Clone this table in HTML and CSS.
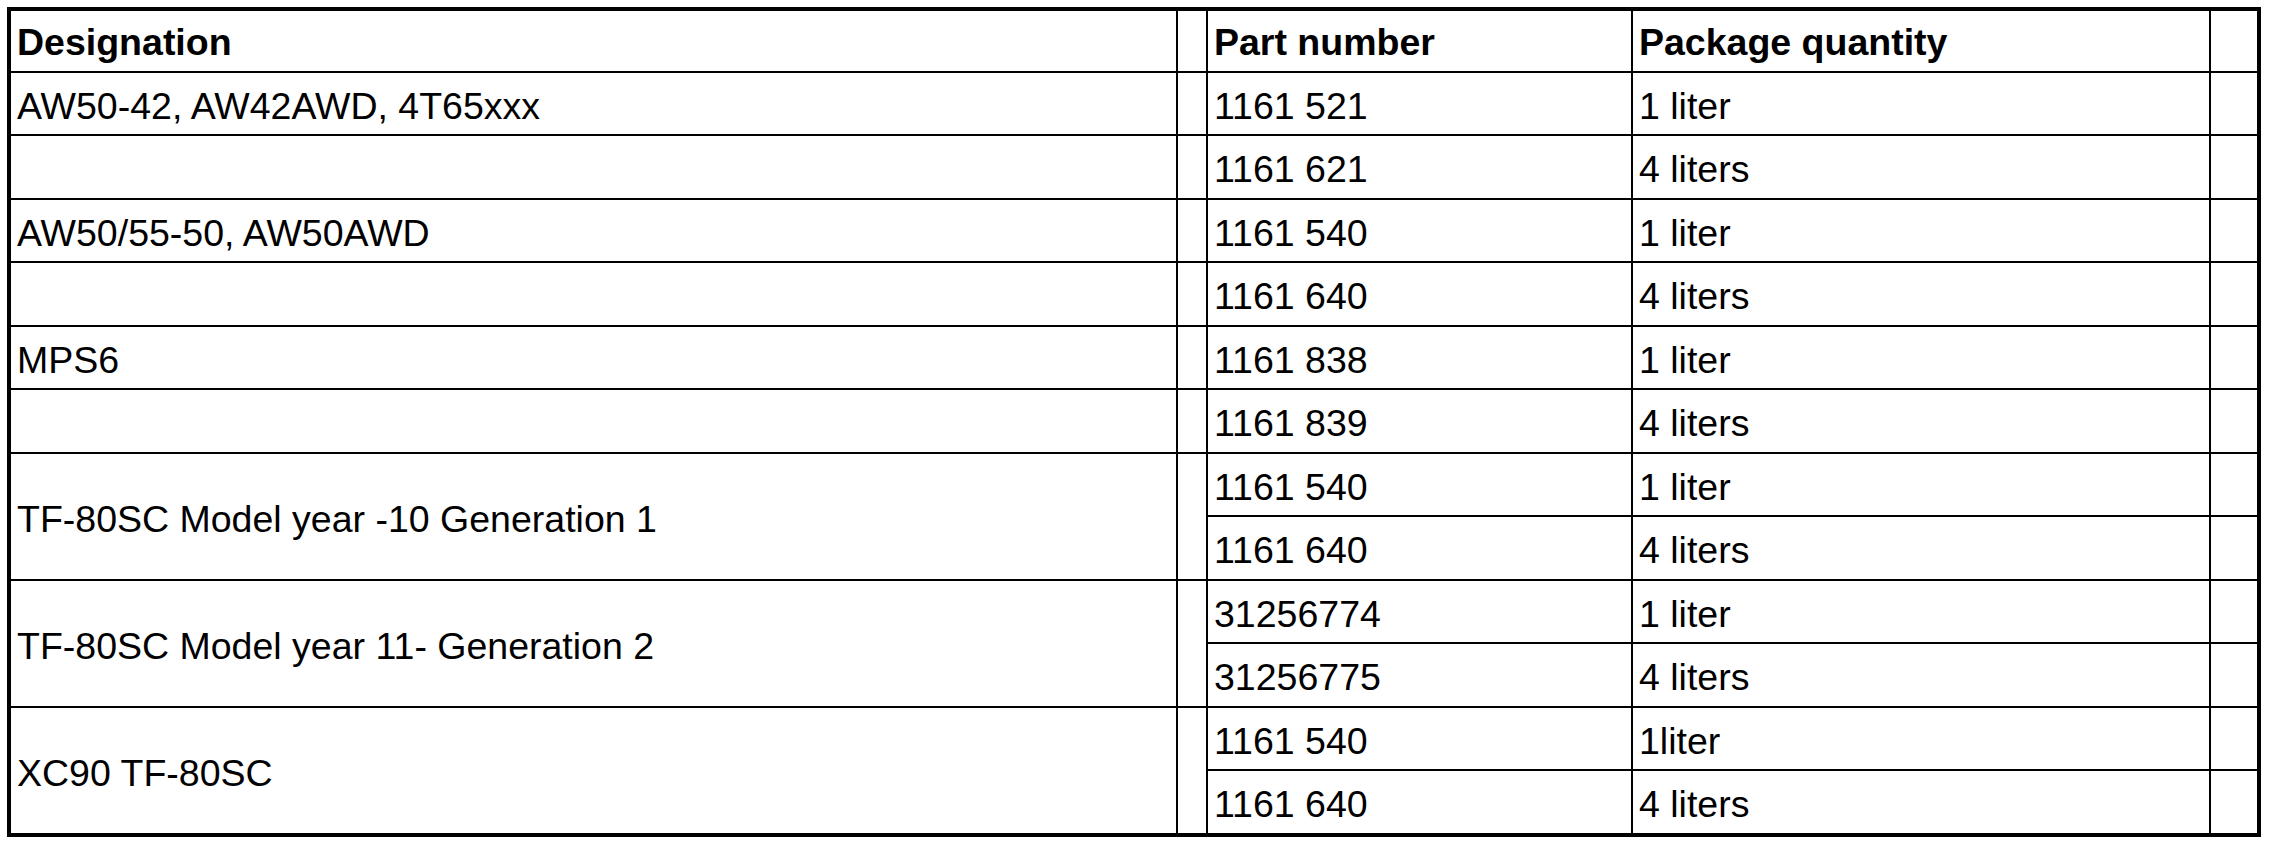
FILE: index.html
```html
<!DOCTYPE html>
<html lang="en">
<head>
<meta charset="utf-8">
<title>Transmission oil</title>
<link rel="stylesheet" href="styles.css">
</head>
<body>
<div class="grid">
  <div class="cell head">Designation</div>
  <div class="cell"></div>
  <div class="cell head">Part number</div>
  <div class="cell head">Package quantity</div>
  <div class="cell"></div>

  <div class="cell">AW50-42, AW42AWD, 4T65xxx</div>
  <div class="cell"></div>
  <div class="cell">1161 521</div>
  <div class="cell">1 liter</div>
  <div class="cell"></div>

  <div class="cell"></div>
  <div class="cell"></div>
  <div class="cell">1161 621</div>
  <div class="cell">4 liters</div>
  <div class="cell"></div>

  <div class="cell">AW50/55-50, AW50AWD</div>
  <div class="cell"></div>
  <div class="cell">1161 540</div>
  <div class="cell">1 liter</div>
  <div class="cell"></div>

  <div class="cell"></div>
  <div class="cell"></div>
  <div class="cell">1161 640</div>
  <div class="cell">4 liters</div>
  <div class="cell"></div>

  <div class="cell">MPS6</div>
  <div class="cell"></div>
  <div class="cell">1161 838</div>
  <div class="cell">1 liter</div>
  <div class="cell"></div>

  <div class="cell"></div>
  <div class="cell"></div>
  <div class="cell">1161 839</div>
  <div class="cell">4 liters</div>
  <div class="cell"></div>

  <div class="cell span2">TF-80SC Model year -10 Generation 1</div>
  <div class="cell span2"></div>
  <div class="cell">1161 540</div>
  <div class="cell">1 liter</div>
  <div class="cell"></div>
  <div class="cell">1161 640</div>
  <div class="cell">4 liters</div>
  <div class="cell"></div>

  <div class="cell span2">TF-80SC Model year 11- Generation 2</div>
  <div class="cell span2"></div>
  <div class="cell">31256774</div>
  <div class="cell">1 liter</div>
  <div class="cell"></div>
  <div class="cell">31256775</div>
  <div class="cell">4 liters</div>
  <div class="cell"></div>

  <div class="cell span2">XC90 TF-80SC</div>
  <div class="cell span2"></div>
  <div class="cell">1161 540</div>
  <div class="cell">1liter</div>
  <div class="cell"></div>
  <div class="cell">1161 640</div>
  <div class="cell">4 liters</div>
  <div class="cell"></div>
</div>
</body>
</html>
```
FILE: styles.css
```css
html, body {
  margin: 0;
  background: #ffffff;
}

body {
  padding: 7px;
  font-family: "Liberation Sans", Arial, Helvetica, sans-serif;
  font-size: 37.5px;
  color: #000000;
}

.grid {
  display: grid;
  width: 2254px;
  box-sizing: border-box;
  background: #000000;
  padding: 4px;
  gap: 2px;
  grid-template-columns: 1165px 28px 423px 576px 46px;
  grid-template-rows: 60px 61px 62px 61px 62px 61px 62px 61px 62px 61px 62px 61px 62px;
}

.cell {
  background: #ffffff;
  display: flex;
  align-items: center;
  padding: 5px 4px 0 6px;
  white-space: nowrap;
  overflow: hidden;
}

.head {
  font-weight: bold;
  padding-top: 3px;
}

.span2 {
  grid-row: span 2;
}
```
